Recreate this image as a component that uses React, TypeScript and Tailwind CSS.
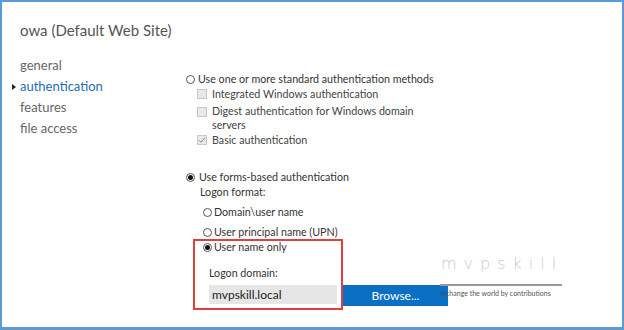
import React from "react";

const Radio = ({ checked }: { checked?: boolean }) => (
  <span className="flex h-[9px] w-[9px] shrink-0 items-center justify-center rounded-full border border-[#555] bg-white">
    {checked && <span className="h-[5px] w-[5px] rounded-full bg-[#111]" />}
  </span>
);

const Check = ({ checked }: { checked?: boolean }) => (
  <span className="flex h-[10px] w-[10px] shrink-0 items-center justify-center border border-[#c8c8c8] bg-[#e8e8e8]">
    {checked && (
      <svg width="8" height="8" viewBox="0 0 8 8">
        <path d="M1 4.2 L3 6.2 L7 1.6" fill="none" stroke="#8a8a8a" strokeWidth="1" />
      </svg>
    )}
  </span>
);

const nav = ["general", "authentication", "features", "file access"];

export default function App() {
  return (
    <div
      className="relative h-[330px] w-[624px] overflow-hidden border-x-2 border-t-2 border-b-[3px] border-[#5b9bd5] bg-white text-[#444]"
      style={{ fontFamily: 'Lato, "Open Sans", sans-serif' }}
    >
      <h1 className="ml-[18px] mt-[16px] h-[24px] text-[15px] leading-[24px] font-normal text-[#555]">
        owa (Default Web Site)
      </h1>
      <div className="mt-[13px] flex">
        <ul className="w-[184px] shrink-0 pl-[18px] text-[13px] text-[#666]">
          {nav.map((n) => (
            <li key={n} className={`relative flex h-[21px] items-center ${n === "authentication" ? "text-[#1e6db4]" : ""}`}>
              {n === "authentication" && (
                <span className="absolute left-[-8px] top-[8px] h-0 w-0 border-y-[3px] border-l-[4px] border-y-transparent border-l-[#222]" />
              )}
              {n}
            </li>
          ))}
        </ul>
        <div className="text-[10.7px] text-[#333]">
          <div className="mt-[17px] flex h-[15px] items-center gap-[3px]">
            <Radio />
            <span>Use one or more standard authentication methods</span>
          </div>
          <div className="ml-[11px] flex h-[14px] items-center gap-[5px] text-[#444]">
            <Check />
            <span>Integrated Windows authentication</span>
          </div>
          <div className="ml-[11px] mt-[3px] flex h-[15px] items-center gap-[5px] text-[#444]">
            <Check />
            <span>Digest authentication for Windows domain</span>
          </div>
          <div className="ml-[26px] flex h-[12px] items-center text-[#444]">servers</div>
          <div className="ml-[11px] mt-[2px] flex h-[14px] items-center gap-[5px] text-[#444]">
            <Check checked />
            <span>Basic authentication</span>
          </div>

          <div className="mt-[23px] flex h-[14px] items-center gap-[4px]">
            <Radio checked />
            <span>Use forms-based authentication</span>
          </div>
          <div className="ml-[14px] mt-[1px] flex h-[14px] items-center">Logon format:</div>
          <div className="ml-[17px] mt-[6px] flex h-[14px] items-center gap-[2px]">
            <Radio />
            <span>Domain\user name</span>
          </div>
          <div className="ml-[17px] mt-[7px] flex h-[13px] items-center gap-[2px]">
            <Radio />
            <span>User principal name (UPN)</span>
          </div>

          <div className="flex items-end">
            <div className="ml-[7px] w-[150px] border-2 border-[#e2403f] pb-[4px]">
              <div className="ml-[8px] flex h-[12px] items-center gap-[2px]">
                <Radio checked />
                <span>User name only</span>
              </div>
              <div className="ml-[14px] mt-[13px] flex h-[14px] items-center">Logon domain:</div>
              <div className="ml-[14px] mt-[5px] flex h-[19px] w-[128px] items-center bg-[#e6e6e6] pl-[3px] text-[12px] text-[#222]">
                mvpskill.local
              </div>
            </div>
            <button className="mb-[4px] h-[21px] w-[105px] bg-[#0b6fc3] text-[12px] text-white">Browse...</button>
          </div>
        </div>
      </div>

      <div className="pointer-events-none absolute left-[438px] top-[252px] w-[124px]">
        <div className="h-[20px] text-center text-[16px] leading-[20px] tracking-[7px] text-[#cacaca]" style={{ fontFamily: '"DejaVu Sans", sans-serif', fontWeight: 200 }}>
          mvpskill
        </div>
        <div className="mt-[10px] h-[2px] w-[122px] bg-[#9a9a9a]" />
        <div className="mt-[3px] flex items-center gap-[1px] text-[7px] leading-[8px] text-[#555]">
          <span className="h-[5px] w-[5px] rounded-full bg-[#1b5fae]" />
          <span>change the world by contributions</span>
        </div>
      </div>
    </div>
  );
}
